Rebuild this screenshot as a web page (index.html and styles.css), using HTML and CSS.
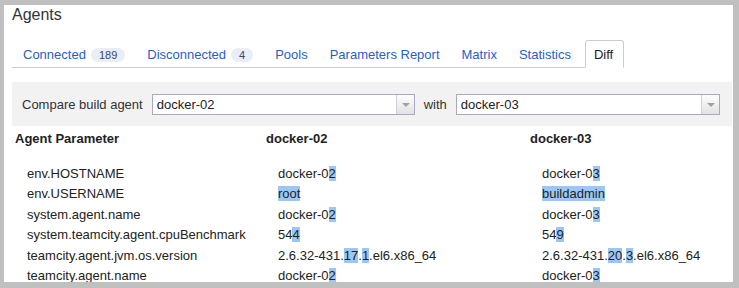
FILE: index.html
```html
<!DOCTYPE html>
<html lang="en">
<head>
    <meta charset="UTF-8">
    <title>Agents - Diff</title>
    <link rel="stylesheet" href="styles.css">
</head>
<body>
    <div class="page">
        <h1 class="title">Agents</h1>

        <ul class="tabs">
            <li class="tab"><a href="#">Connected</a><span class="count">189</span></li>
            <li class="tab"><a href="#">Disconnected</a><span class="count">4</span></li>
            <li class="tab"><a href="#">Pools</a></li>
            <li class="tab"><a href="#">Parameters Report</a></li>
            <li class="tab"><a href="#">Matrix</a></li>
            <li class="tab"><a href="#">Statistics</a></li>
            <li class="tab active">Diff</li>
        </ul>

        <div class="compare-bar">
            <label>Compare build agent</label>
            <div class="select select-first">
                <span class="select-value">docker-02</span>
                <span class="select-arrow"></span>
            </div>
            <span class="with">with</span>
            <div class="select select-second">
                <span class="select-value">docker-03</span>
                <span class="select-arrow"></span>
            </div>
        </div>

        <div class="diff-table">
            <div class="diff-head">
                <div>Agent Parameter</div>
                <div>docker-02</div>
                <div>docker-03</div>
            </div>

            <div class="diff-row">
                <div>env.HOSTNAME</div>
                <div>docker-0<span class="hl">2</span></div>
                <div>docker-0<span class="hl">3</span></div>
            </div>
            <div class="diff-row">
                <div>env.USERNAME</div>
                <div><span class="hl">root</span></div>
                <div><span class="hl">buildadmin</span></div>
            </div>
            <div class="diff-row">
                <div>system.agent.name</div>
                <div>docker-0<span class="hl">2</span></div>
                <div>docker-0<span class="hl">3</span></div>
            </div>
            <div class="diff-row">
                <div>system.teamcity.agent.cpuBenchmark</div>
                <div>54<span class="hl">4</span></div>
                <div>54<span class="hl">9</span></div>
            </div>
            <div class="diff-row">
                <div>teamcity.agent.jvm.os.version</div>
                <div>2.6.32-431.<span class="hl">17</span>.<span class="hl">1</span>.el6.x86_64</div>
                <div>2.6.32-431.<span class="hl">20</span>.<span class="hl">3</span>.el6.x86_64</div>
            </div>
            <div class="diff-row">
                <div>teamcity.agent.name</div>
                <div>docker-0<span class="hl">2</span></div>
                <div>docker-0<span class="hl">3</span></div>
            </div>
        </div>
    </div>
</body>
</html>
```

FILE: styles.css
```css
body {
    margin: 0;
    padding: 5px 6px 6px 4px;
    background: #c0c0c0;
    font-family: "Liberation Sans", Arial, sans-serif;
    font-size: 13px;
    color: #333;
}

.page {
    height: 277px;
    padding: 1px 1px 0 8px;
    box-sizing: border-box;
    background: #fff;
    overflow: hidden;
}

.title {
    margin: 0;
    font-size: 16px;
    line-height: 18px;
    font-weight: normal;
    color: #333;
}

.tabs {
    display: flex;
    width: fit-content;
    margin: 16px 0 0;
    padding: 0;
    list-style: none;
    border-bottom: 1px solid #ccc;
}

.tab {
    display: flex;
    align-items: center;
    padding: 6px 10px 5px;
    line-height: 15px;
    border: 1px solid transparent;
    border-bottom: 0;
}

.tab a {
    color: #1f5fc8;
    text-decoration: none;
}

.tab.active {
    margin-left: 3px;
    margin-bottom: -1px;
    padding-left: 8px;
    border: 1px solid #ccc;
    border-bottom-color: #fff;
    border-radius: 3px 3px 0 0;
    background: #fff;
    color: #222;
}

.count {
    margin-left: 5px;
    padding: 0 8px;
    font-size: 11px;
    line-height: 14px;
    border-radius: 7px;
    background: #e8edf6;
    color: #3a4a66;
}

.compare-bar {
    display: flex;
    align-items: center;
    height: 44px;
    margin-top: 14px;
    padding-left: 10px;
    background: #f2f2f2;
}

.select {
    display: flex;
    height: 21px;
    box-sizing: border-box;
    border: 1px solid #a9aac0;
    background: #fff;
}

.select-first {
    width: 263px;
    margin-left: 9px;
}

.select-second {
    width: 264px;
}

.select-value {
    flex: 1;
    padding-left: 4px;
    line-height: 19px;
    color: #222;
}

.select-arrow {
    position: relative;
    width: 17px;
    border-left: 1px solid #d0d0d8;
    background: linear-gradient(#fdfdfd, #e2e2e2);
}

.select-arrow::after {
    content: "";
    position: absolute;
    top: 8px;
    left: 5px;
    border-left: 4px solid transparent;
    border-right: 4px solid transparent;
    border-top: 4px solid #a0a0a0;
}

.with {
    margin: 0 9px;
}

.diff-head,
.diff-row {
    display: grid;
    grid-template-columns: 251px 264px 1fr;
    white-space: nowrap;
}

.diff-head {
    margin-top: 5px;
    margin-bottom: 18px;
    line-height: 15px;
    font-weight: bold;
    color: #222;
}

.diff-head div {
    padding-left: 3px;
}

.diff-row {
    line-height: 20.4px;
    color: #222;
}

.diff-row div {
    padding-left: 15px;
}

.hl {
    background: #9cc7f5;
}
```
